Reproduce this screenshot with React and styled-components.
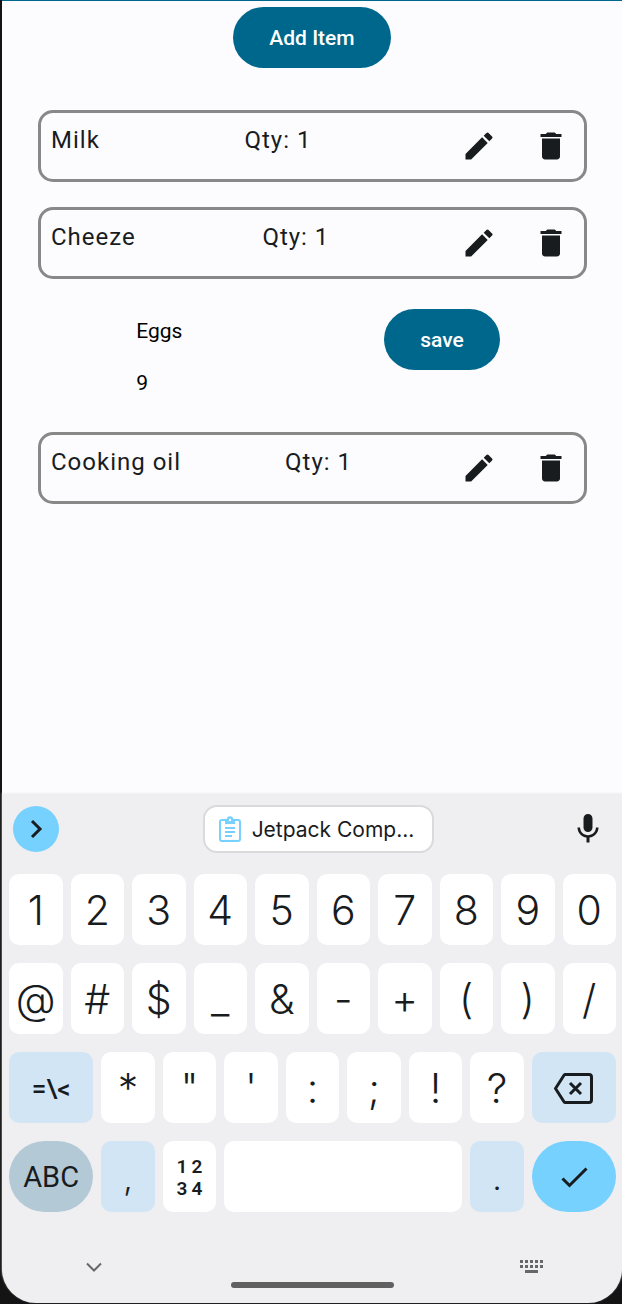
import React from 'react';
import styled, { createGlobalStyle } from 'styled-components';
import { MdEdit, MdDelete, MdMic } from 'react-icons/md';

const GlobalStyle = createGlobalStyle`
  *, *::before, *::after { box-sizing: border-box; }
  body { margin: 0; background: #141415; font-family: Roboto, sans-serif; color: #191c1e; }
  button, input { font: inherit; color: inherit; border: 0; margin: 0; padding: 0; background: none; }
  button { cursor: pointer; }
  svg { display: block; }
`;

const Device = styled.div`
  min-height: 100vh;
  display: flex;
  flex-direction: column;
  padding: 0 0 1px 2px;
`;

const Screen = styled.main`
  flex: 1;
  display: flex;
  flex-direction: column;
  align-items: center;
  gap: 42px;
  padding: 6px 0 24px;
  border-top: 1px solid #00678c;
  background: #fcfcff;
`;

const FilledButton = styled.button`
  height: 61px;
  padding: 1px 36px 0;
  border-radius: 31px;
  background: #00678c;
  color: #fff;
  font-size: 21px;
  font-weight: 500;
`;

const List = styled.ul`
  width: 100%;
  margin: 0;
  padding: 0;
  list-style: none;
  display: flex;
  flex-direction: column;
  gap: 25px;
`;

const ItemCard = styled.li`
  display: flex;
  justify-content: space-between;
  height: 72px;
  margin: 0 35px 0 36px;
  border-radius: 15px;
  box-shadow: inset 0 0 0 3px #888;
`;

const ItemText = styled.span`
  padding: 12px 13px;
  font-size: 24px;
  line-height: 36px;
  letter-spacing: 1px;
`;

const Actions = styled.div`
  display: flex;
`;

const IconButton = styled.button`
  width: 72px;
  height: 72px;
  display: grid;
  place-items: center;
`;

const EditRow = styled.li`
  display: flex;
  justify-content: space-evenly;
  align-items: flex-start;
  height: 103px;

  ${FilledButton} { margin-top: 5px; }
`;

const Fields = styled.div`
  display: flex;
  flex-direction: column;
  width: 138px;
`;

const Field = styled.input`
  width: 100%;
  height: 52px;
  padding: 1px 12px 0;
  font-size: 21px;
  color: #000;
  outline: none;
`;

const Keyboard = styled.section`
  background: #efeff1;
  border-radius: 0 0 34px 34px;
  box-shadow: 0 -1px 2px #efeff1;
`;

const Toolbar = styled.div`
  display: flex;
  justify-content: space-between;
  align-items: center;
  padding: 11px 12px 21px 11px;
`;

const ExpandButton = styled.button`
  width: 46px;
  height: 46px;
  border-radius: 50%;
  display: grid;
  place-items: center;
  background: #76d1ff;
`;

const Chip = styled.button`
  height: 48px;
  margin-left: 12px;
  padding: 0 18px 0 13px;
  display: flex;
  align-items: center;
  gap: 10px;
  border: 2px solid #d9dadc;
  border-radius: 14px;
  background: #fff;
  font-family: Inter, sans-serif;
  font-size: 21px;
`;

const MicButton = styled.button`
  width: 44px;
  height: 44px;
  display: grid;
  place-items: center;
`;

const Keys = styled.div`
  display: grid;
  grid-template-columns: repeat(20, 1fr);
  row-gap: 18px;
  padding: 0 2px 0 3px;
`;

const tones = { plain: '#fff', soft: '#d2e5f5', mode: '#b4c9d6', accent: '#76d1ff' };

const Key = styled.button`
  grid-column: span ${(p) => p.$span || 2};
  min-width: 0;
  height: 71px;
  margin: 0 4px;
  padding-top: 2px;
  display: grid;
  place-items: center;
  border-radius: ${(p) => (p.$round ? 36 : 10)}px;
  background: ${(p) => tones[p.$tone || 'plain']};
  font-family: ${(p) => (p.$label ? 'Roboto' : 'Inter')}, sans-serif;
  font-size: ${(p) => p.$size || 41}px;
  font-weight: ${(p) => p.$weight || 350};
  line-height: 1;
  white-space: nowrap;
`;

const NumPadLabel = styled.span`
  display: grid;
  grid-template-columns: 15px 15px;
  line-height: 22px;
`;

const NavRow = styled.div`
  display: flex;
  justify-content: space-between;
  padding: 41px 77px 0 78px;
`;

const NavButton = styled.button`
  width: 28px;
  height: 28px;
  display: grid;
  place-items: center;
`;

const HomeBar = styled.div`
  width: 163px;
  height: 6px;
  margin: 1px auto 0;
  border-radius: 3px;
  background: #606061;
`;

const KeyboardFoot = styled.div`
  padding-bottom: 15px;
`;

const ChevronRight = () => (
  <svg width="24" height="24" fill="none" stroke="#191c1e" strokeWidth="3">
    <path d="M8 4l8 8-8 8" />
  </svg>
);

const ClipboardIcon = () => (
  <svg width="24" height="28" fill="none" stroke="#76d1ff" strokeWidth="2">
    <rect x="2" y="5" width="20" height="21" rx="2" />
    <path d="M7 5h10v4H7z" fill="#76d1ff" stroke="none" />
    <circle cx="12" cy="4.5" r="3.2" fill="#76d1ff" stroke="none" />
    <circle cx="12" cy="5" r="1.2" fill="#fff" stroke="none" />
    <path d="M7 13h10M7 17h10M7 21h7" />
  </svg>
);

const BackspaceIcon = () => (
  <svg width="42" height="34" fill="none" stroke="#191c1e" strokeWidth="3" strokeLinejoin="round">
    <path d="M12.5 2.5H36q2.5 0 2.5 2.5V28q0 2.5-2.5 2.5H12.5q-1 0-1.5-.8L2.500 16.500 11 3.300q.5-.8 1.500-.8z" />
    <path d="M17 11l11 11M28 11l-11 11" />
  </svg>
);

const CheckIcon = () => (
  <svg width="36" height="36" fill="none" stroke="#191c1e" strokeWidth="3">
    <path d="M6.500 18.500l7 7L30.500 8.500" />
  </svg>
);

const ChevronDown = () => (
  <svg width="20" height="20" fill="none" stroke="#666769" strokeWidth="2">
    <path d="M3 6.500l7 7 7-7" />
  </svg>
);

const KeyboardIcon = () => (
  <svg width="28" height="20" fill="#666769">
    {[0, 1, 2, 3, 4].map((i) => (
      <React.Fragment key={i}>
        <rect x={3 + i * 5} y="3" width="3" height="3" />
        <rect x={3 + i * 5} y="8" width="3" height="3" />
      </React.Fragment>
    ))}
    <rect x="8" y="13" width="13" height="3" />
  </svg>
);

const Item = ({ name, qty }) => (
  <ItemCard>
    <ItemText>{name}</ItemText>
    <ItemText>Qty: {qty}</ItemText>
    <Actions>
      <IconButton aria-label={`Edit ${name}`}><MdEdit size={36} /></IconButton>
      <IconButton aria-label={`Delete ${name}`}><MdDelete size={36} /></IconButton>
    </Actions>
  </ItemCard>
);

export default function App() {
  return (
    <Device>
      <GlobalStyle />
      <Screen>
        <FilledButton>Add Item</FilledButton>
        <List>
          <Item name="Milk" qty={1} />
          <Item name="Cheeze" qty={1} />
          <EditRow>
            <Fields>
              <Field aria-label="Item name" defaultValue="Eggs" />
              <Field aria-label="Quantity" inputMode="numeric" defaultValue="9" />
            </Fields>
            <FilledButton>save</FilledButton>
          </EditRow>
          <Item name="Cooking oil" qty={1} />
        </List>
      </Screen>
      <Keyboard aria-label="Keyboard">
        <Toolbar>
          <ExpandButton aria-label="Expand toolbar"><ChevronRight /></ExpandButton>
          <Chip><ClipboardIcon />Jetpack Comp...</Chip>
          <MicButton aria-label="Voice input"><MdMic size={36} /></MicButton>
        </Toolbar>
        <Keys>
          {[...'1234567890', ...'@#$_&-+()/'].map((k) => <Key key={k}>{k}</Key>)}
          <Key $label $span={3} $tone="soft" $size={26} $weight={500}>{'=\\<'}</Key>
          {[...'*"\':;!?'].map((k) => <Key key={k}>{k}</Key>)}
          <Key $span={3} $tone="soft" aria-label="Backspace"><BackspaceIcon /></Key>
          <Key $label $span={3} $tone="mode" $round $size={29} $weight={400}>ABC</Key>
          <Key $tone="soft" $size={34}>,</Key>
          <Key $label $size={19} $weight={600} aria-label="Number pad">
            <NumPadLabel><span>1</span><span>2</span><span>3</span><span>4</span></NumPadLabel>
          </Key>
          <Key $span={8} aria-label="Space" />
          <Key $tone="soft" $size={34}>.</Key>
          <Key $span={3} $tone="accent" $round aria-label="Done"><CheckIcon /></Key>
        </Keys>
        <KeyboardFoot>
          <NavRow>
            <NavButton aria-label="Hide keyboard"><ChevronDown /></NavButton>
            <NavButton aria-label="Switch keyboard"><KeyboardIcon /></NavButton>
          </NavRow>
          <HomeBar />
        </KeyboardFoot>
      </Keyboard>
    </Device>
  );
}
